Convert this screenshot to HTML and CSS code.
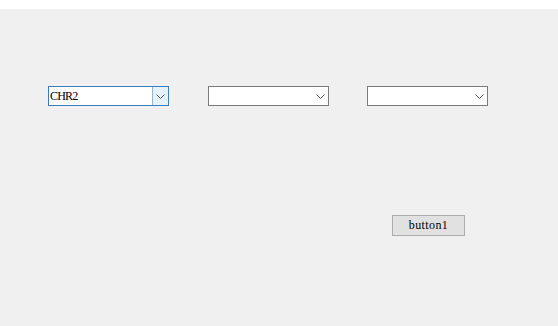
FILE: index.html
```html
<!DOCTYPE html>
<html>
<head>
<meta charset="utf-8">
<link rel="stylesheet" href="styles.css">
</head>
<body>
<div class="top"></div>
<div class="panel">
  <div class="row">
    <div class="combo focused">
      <span class="value">CHR2</span>
      <span class="drop"><svg width="9" height="5" viewBox="0 0 9 5"><path d="M0.5 0.5 L4.5 4.5 L8.5 0.5" fill="none" stroke="#5c5c5c" stroke-width="1"/></svg></span>
    </div>
    <div class="combo second">
      <span class="value"></span>
      <span class="drop"><svg width="9" height="5" viewBox="0 0 9 5"><path d="M0.5 0.5 L4.5 4.5 L8.5 0.5" fill="none" stroke="#5c5c5c" stroke-width="1"/></svg></span>
    </div>
    <div class="combo third">
      <span class="value"></span>
      <span class="drop"><svg width="9" height="5" viewBox="0 0 9 5"><path d="M0.5 0.5 L4.5 4.5 L8.5 0.5" fill="none" stroke="#5c5c5c" stroke-width="1"/></svg></span>
    </div>
  </div>
  <div class="btnrow">
    <button class="btn">button1</button>
  </div>
</div>
</body>
</html>
```

FILE: styles.css
```css
html, body {
  margin: 0;
  padding: 0;
  background: #ffffff;
}
.top {
  height: 9px;
  background: #ffffff;
}
.panel {
  background: #f0f0f0;
  height: 317px;
  box-sizing: border-box;
  padding-top: 77px;
}
.row {
  display: flex;
  padding-left: 48px;
}
.combo {
  box-sizing: border-box;
  width: 121px;
  height: 20px;
  border: 1px solid #7a7a7a;
  background: #ffffff;
  display: flex;
  align-items: stretch;
}
.second {
  margin-left: 39px;
}
.third {
  margin-left: 38px;
}
.combo.focused {
  border-color: #3a7dbb;
}
.value {
  flex: 1;
  font-family: "Liberation Serif", serif;
  font-size: 12px;
  letter-spacing: -0.8px;
  line-height: 18px;
  padding-left: 1px;
  color: #000;
}
.drop {
  width: 16px;
  display: flex;
  align-items: center;
  justify-content: center;
  padding-top: 1px;
  box-sizing: border-box;
}
.focused .drop {
  background: #e5f1fb;
  border-left: 1px solid #8fb8de;
}
.btnrow {
  padding-left: 392px;
  padding-top: 109px;
}
.btn {
  box-sizing: border-box;
  width: 73px;
  height: 21px;
  margin: 0;
  padding: 0;
  border: 1px solid #adadad;
  background: #e1e1e1;
  font-family: "Liberation Serif", serif;
  font-size: 12px;
  letter-spacing: 0.4px;
  color: #000;
  display: block;
}
```
